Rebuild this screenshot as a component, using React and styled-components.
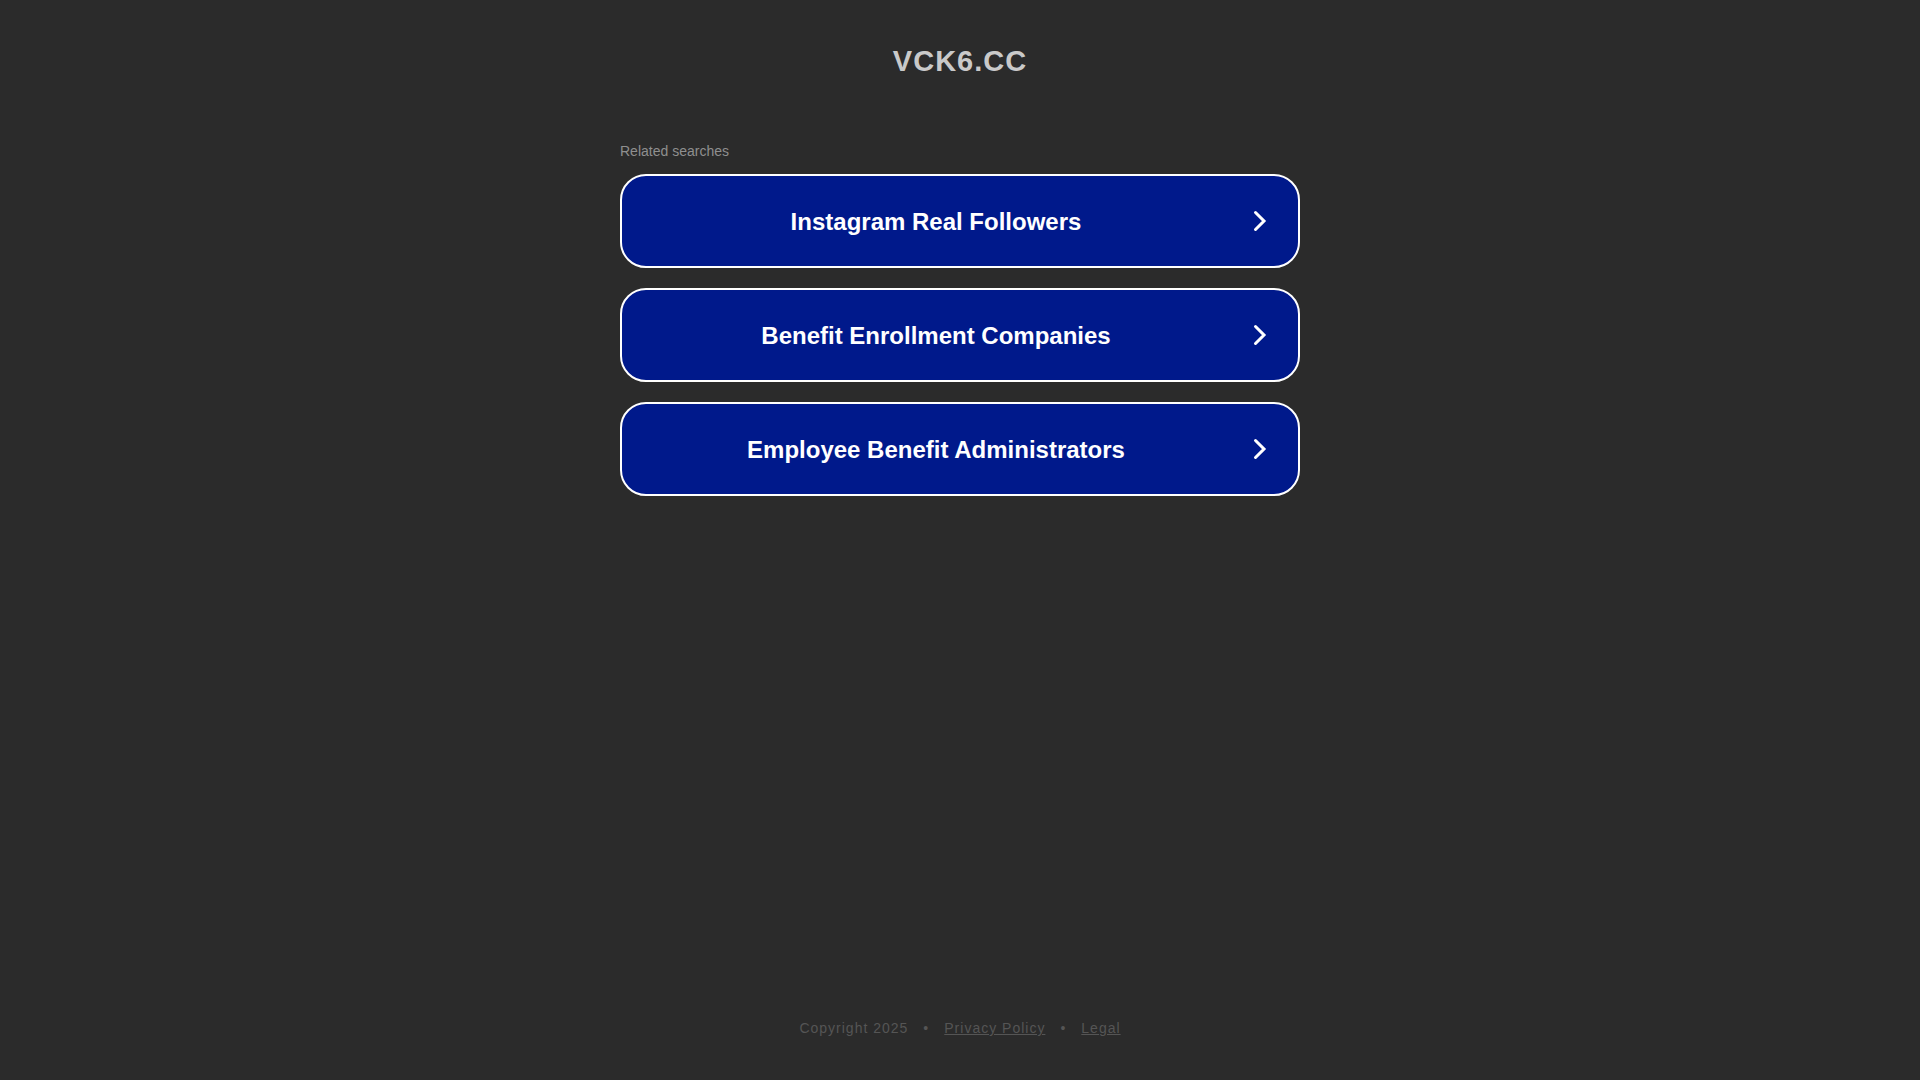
import React from 'react';
import styled, { createGlobalStyle } from "styled-components";

const GlobalStyle = createGlobalStyle`
  body{
    margin: 0;
    background-color: #2b2b2b;
    font-family: Arial, "Liberation Sans", sans-serif;
  }
`;

const Page = styled.div`
  min-height: 100vh;
  box-sizing: border-box;
  padding: 44px 20px;
  display: flex;
  flex-direction: column;
  align-items: center;
`;

const Title = styled.h1`
  margin: 0;
  color: #c9c9c9;
  font-size: 29px;
  line-height: 34px;
  letter-spacing: 1px;
  text-transform: uppercase;
`;

const Searches = styled.main`
  width: 100%;
  max-width: 680px;
  margin-top: 64px;
`;

const Caption = styled.h2`
  margin: 0 0 14px;
  color: #8f8f8f;
  font-size: 14px;
  font-weight: 400;
  line-height: 18px;
`;

const List = styled.div`
  display: flex;
  flex-direction: column;
  gap: 20px;
`;

const SearchLink = styled.a`
  min-height: 94px;
  box-sizing: border-box;
  padding: 20px 26px;
  display: flex;
  align-items: center;
  gap: 24px;
  background-color: #00198b;
  border: 2px solid #fff;
  border-radius: 26px;
  color: #fff;
  font-size: 24px;
  font-weight: 700;
  line-height: 27px;
  text-align: center;
  text-decoration: none;

  span{
    flex-grow: 1;
  }
  svg{
    width: 24px;
    height: 24px;
    flex-shrink: 0;
    fill: none;
    stroke: currentColor;
    stroke-width: 3;
    stroke-linecap: round;
  }
`;

const Footer = styled.footer`
  margin-top: auto;
  display: flex;
  gap: 15px;
  color: #555;
  font-size: 14px;
  line-height: 16px;
  letter-spacing: 1px;

  a{
    color: inherit;
  }
`;

const searches = [
    'Instagram Real Followers',
    'Benefit Enrollment Companies',
    'Employee Benefit Administrators',
];

const Chevron = () => (
    <svg viewBox="0 0 24 24" aria-hidden="true">
        <path d="M7.5 3.5L16 12l-8.5 8.5" />
    </svg>
);

const App = () => {
    return (
        <>
            <GlobalStyle />
            <Page>
                <Title>vck6.cc</Title>
                <Searches>
                    <Caption>Related searches</Caption>
                    <List>
                        {searches.map((text) => (
                            <SearchLink key={text} href="#">
                                <span>{text}</span>
                                <Chevron />
                            </SearchLink>
                        ))}
                    </List>
                </Searches>
                <Footer>
                    <span>Copyright 2025</span>
                    <span>•</span>
                    <a href="#privacy">Privacy Policy</a>
                    <span>•</span>
                    <a href="#legal">Legal</a>
                </Footer>
            </Page>
        </>
    );
};

export default App;
